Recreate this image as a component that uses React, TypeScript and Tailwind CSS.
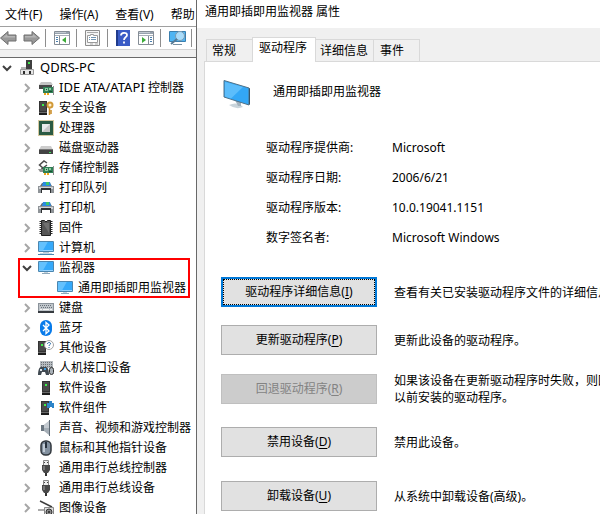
import type { ReactNode } from "react";

const ui = "font-['Noto_Sans','Noto_Sans_CJK_SC',sans-serif]";

const Screen = () => (
  <>
    <path d="M1 1.5h14v9H1z" fill="#35a9fa" />
    <path d="M1 1.5h9l-5 9H1z" fill="#64c1fd" />
    <path d="M.5 1.5h15v10H.5z" fill="none" stroke="#4a86b0" />
  </>
);

const Monitor = () => (
  <svg width="16" height="16" viewBox="0 0 16 16" className="shrink-0">
    <Screen />
    <path d="M6 12h4v1H6z" fill="#c3d2dd" />
    <path d="M4 13h8v1H4z" fill="#8fa9bb" />
  </svg>
);

const Computer = () => (
  <svg width="16" height="16" viewBox="0 0 16 16" className="shrink-0">
    <Screen />
    <path d="M5 12h6v1H5z" fill="#b9c8d3" />
    <path d="M2 13h12v1H2z" fill="#c2d6e4" />
    <path d="M0 14h16v1H0z" fill="#4a86b0" />
  </svg>
);

const Tower = ({ children, x = 4 }: { children?: ReactNode; x?: number }) => (
  <svg width="16" height="16" viewBox="0 0 16 16" className="shrink-0">
    <path d={`M${x} 1h8v14H${x}z`} fill="#333" />
    <path d={`M${x + 1} 2h6v9H${x + 1}z`} fill="#4a4a4a" />
    <path d={`M${x + 3} 4h2v2H${x + 3}z`} fill="#3df04a" />
    <path d={`M${x} 12h8v1H${x}z`} fill="#6a6a6a" />
    <path d={`M${x} 13h8v2H${x}z`} fill="#1d1d1d" />
    {children}
  </svg>
);

const PcRoot = () => (
  <svg width="16" height="16" viewBox="0 0 16 16" className="shrink-0">
    <path d="M6 0h6v10H6z" fill="#3f3f3f" />
    <path d="M8 2h2v2H8z" fill="#42e84c" />
    <path d="M1 7h5v2H1z" fill="#b4b4b4" />
    <path d="M.5 9.5h13v5H.5z" fill="#e6e6e6" stroke="#9a9a9a" />
    <path d="M3 11h2v3H3zM9 11h2v3H9z" fill="#2c2c2c" />
  </svg>
);

const Card = () => (
  <>
    <path d="M5 7h10v6H5z" fill="#2f8055" />
    <path d="M7 8h3v3H7zM11 8h2v2h-2z" fill="#8ccaa2" />
    <path d="M8 9h1v1H8zM11 11h3v1h-3z" fill="#184f33" />
    <path d="M6 13h2v2H6zM9 13h2v2H9z" fill="#eda61c" />
    <path d="M15 6h1v9h-1z" fill="#8f8f8f" />
  </>
);

const Ide = () => (
  <svg width="16" height="16" viewBox="0 0 16 16" className="shrink-0">
    <path d="M3 2h10l2 3H1z" fill="#c4c4c4" />
    <path d="M1 5h13v4H1z" fill="#484848" />
    <Card />
  </svg>
);

const Storage = () => (
  <svg width="16" height="16" viewBox="0 0 16 16" className="shrink-0">
    <path d="M9 3 6 1 1.5 5 5 8l4-3M3 9h3" fill="none" stroke="#4c4c4c" strokeWidth="1.5" />
    <path d="M0 9h8v3H2z" fill="#929292" />
    <Card />
  </svg>
);

const Security = () => (
  <Tower x={1}>
    <path d="M11.5 8v7M11 11h3M11 13h3" stroke="#c98b24" strokeWidth="1.5" />
    <circle cx="12" cy="5" r="2.5" fill="#fff0cf" stroke="#d29a38" strokeWidth="2" />
  </Tower>
);

const Cpu = () => (
  <svg width="16" height="16" viewBox="0 0 16 16" className="shrink-0">
    <path d="M.5.5h15v15H.5z" fill="none" stroke="#aa9343" strokeDasharray="1 1" />
    <path d="M1 1h14v14H1z" fill="#2b5b43" />
    <path d="M4 4h8v8H4z" fill="#c7c7c7" />
    <path d="M4 4h8l-8 8z" fill="#ebebeb" />
  </svg>
);

const Disk = () => (
  <svg width="16" height="16" viewBox="0 0 16 16" className="shrink-0">
    <path d="M3 6h10l2 4H1z" fill="#cdcdcd" />
    <path d="M1 9h14v5H1z" fill="#434343" />
    <path d="M1 9h14v1H1z" fill="#777" />
    <path d="M11 12h2v1h-2z" fill="#3de15c" />
  </svg>
);

const Printer = () => (
  <svg width="16" height="16" viewBox="0 0 16 16" className="shrink-0">
    <path d="M2 6 4 3h8l2 3z" fill="#686c70" />
    <path d="M5 2h7l1 4H4z" fill="#2b8be0" />
    <path d="M8 2h3v3H8z" fill="#3fc46b" />
    <path d="M0 6h16v7H0z" fill="#8f9498" />
    <path d="M1 7h14v2H1z" fill="#cfd2d5" />
    <path d="M3 8h10v5H3z" fill="#2f3234" />
    <path d="M4 10h8v4H4z" fill="#fff" />
  </svg>
);

const Firmware = () => (
  <svg width="16" height="16" viewBox="0 0 16 16" className="shrink-0">
    <path d="M2.5 1v14M13.5 1v14" stroke="#2d2d2d" strokeDasharray="1 1" strokeWidth="2" />
    <path d="M3.500.5h3L8 2 9.500.5h3v15h-9z" fill="#565656" stroke="#222" />
    <path d="M5 3h6v10z" fill="#707070" />
  </svg>
);

const Keyboard = () => (
  <svg width="16" height="16" viewBox="0 0 16 16" className="shrink-0">
    <path d="M0 3h16v10H0z" fill="#8b939b" />
    <path d="M1 4h14v7H1z" fill="#c0c6cb" />
    <path d="M2 5.500h12M3 7.500h11" stroke="#68717a" strokeDasharray="1 1" />
    <path d="M2 9.500h2M5 9.500h6M12 9.500h2" stroke="#f5f5f5" />
    <path d="M0 11h16v2H0z" fill="#363b40" />
  </svg>
);

const Bluetooth = () => (
  <svg width="16" height="16" viewBox="0 0 16 16" className="shrink-0">
    <rect x="2" width="12" height="16" rx="6" fill="#087bea" />
    <path d="m5 5 6 6-3 2.500v-11L11 5l-6 6" fill="none" stroke="#fff" strokeWidth="1.300" />
  </svg>
);

const Unknown = () => (
  <Tower x={0}>
    <circle cx="11" cy="5" r="4.500" fill="#fff" stroke="#a5a5a5" />
    <path d="M9.500 4c0-2 3-2 3-.3 0 1-1.500 1-1.500 2.300M11 7v1" fill="none" stroke="#1f66a3" />
  </Tower>
);

const Hid = () => (
  <svg width="16" height="16" viewBox="0 0 16 16" className="shrink-0">
    <path d="M2 1h13v7H2z" fill="#b5bbc0" />
    <path d="M3 2.500h11M3 4.500h11M3 6.500h11" stroke="#6b7075" strokeDasharray="1 1" />
    <path d="M0 15c0-4 1-8 3-8h5c2 0 3 4 3 8H8l-1-3H4l-1 3z" fill="#414a52" />
    <path d="M2 9h2v2H2z" fill="#dce4ea" />
    <path d="M6 8h2v2H6z" fill="#3f9de0" />
    <rect x="11.500" y="7.500" width="4" height="7" rx="2" fill="#a8b0b7" stroke="#333" />
  </svg>
);

const SoftComponent = () => (
  <Tower x={3}>
    <path d="M9 3h2V1h3v2h2v5h-2V7h-2v1H9z" fill="#2d84c8" />
  </Tower>
);

const Speaker = () => (
  <svg width="16" height="16" viewBox="0 0 16 16" className="shrink-0">
    <path d="M3 5h3v6H3z" fill="#6b7680" />
    <path d="m6 5 5-4v14l-5-4z" fill="#a5aeb6" />
    <path d="m6 5 5-4v7H6z" fill="#c4cad0" />
    <path d="M11 0h1v16h-1z" fill="#5f6a74" />
  </svg>
);

const Mouse = () => (
  <svg width="16" height="16" viewBox="0 0 16 16" className="shrink-0">
    <rect x="3" y="1" width="10" height="14" rx="4.500" fill="#8391a0" stroke="#30363c" strokeWidth="1.500" />
    <path d="M5 4h2v8H5z" fill="#c1cbd5" />
    <path d="M7 2h2v6H7z" fill="#28323d" />
  </svg>
);

const Usb = () => (
  <svg width="16" height="16" viewBox="0 0 16 16" className="shrink-0">
    <path d="M5.500.5h5v5h-5z" fill="#ededed" stroke="#888" />
    <path d="M6 2h1v1H6zM9 2h1v1H9z" fill="#444" />
    <path d="M4 5h8v5l-2 3H6l-2-3z" fill="#494949" />
    <path d="M7 13h2v3H7z" fill="#333" />
    <path d="M5 6h2v4H5z" fill="#777" />
  </svg>
);

const Imaging = () => (
  <svg width="16" height="16" viewBox="0 0 16 16" className="shrink-0">
    <path d="m2 1 12 6" stroke="#3d3d3d" strokeWidth="1.500" />
    <path d="M0 9h8v2H0z" fill="#aaa" />
    <path d="M6.500 7.500h9V16h-9z" fill="#ddd" stroke="#888" />
    <circle cx="11" cy="12" r="3" fill="#888" stroke="#333" />
    <circle cx="11" cy="12" r="1" fill="#222" />
  </svg>
);

type Device = { name: string; model?: string; icon: ReactNode };

const devices: Device[] = [
  { model: "IDE ATA/ATAPI", name: "控制器", icon: <Ide /> },
  { name: "安全设备", icon: <Security /> },
  { name: "处理器", icon: <Cpu /> },
  { name: "磁盘驱动器", icon: <Disk /> },
  { name: "存储控制器", icon: <Storage /> },
  { name: "打印队列", icon: <Printer /> },
  { name: "打印机", icon: <Printer /> },
  { name: "固件", icon: <Firmware /> },
  { name: "计算机", icon: <Computer /> },
];

const moreDevices: Device[] = [
  { name: "键盘", icon: <Keyboard /> },
  { name: "蓝牙", icon: <Bluetooth /> },
  { name: "其他设备", icon: <Unknown /> },
  { name: "人机接口设备", icon: <Hid /> },
  { name: "软件设备", icon: <Tower /> },
  { name: "软件组件", icon: <SoftComponent /> },
  { name: "声音、视频和游戏控制器", icon: <Speaker /> },
  { name: "鼠标和其他指针设备", icon: <Mouse /> },
  { name: "通用串行总线控制器", icon: <Usb /> },
  { name: "通用串行总线设备", icon: <Usb /> },
  { name: "图像设备", icon: <Imaging /> },
];

function Chevron({ open }: { open?: boolean }) {
  return (
    <svg width="10" height="10" viewBox="0 0 10 10" fill="none" strokeWidth="2">
      {open ? <path d="m1 3 4 4 4-4" stroke="#404040" /> : <path d="m3 1 4 4-4 4" stroke="#a6a6a6" />}
    </svg>
  );
}

function DeviceRow({ name, model, icon, open }: Device & { open?: boolean }) {
  return (
    <li className="flex h-5 items-center pl-[22px]">
      <button type="button" aria-label={name} aria-expanded={!!open} className="mr-1.5">
        <Chevron open={open} />
      </button>
      {icon}
      <span className="ml-[5px]">
        {model && <span className="text-[13px]">{model} </span>}
        {name}
      </span>
    </li>
  );
}

const Arrow = ({ back }: { back?: boolean }) => (
  <svg width="17" height="16" viewBox="0 0 17 16">
    <path
      d={back ? "M.5 8 8 1.500V5h8v6H8v3.500z" : "M16.500 8 9 1.500V5H1v6h8v3.500z"}
      fill="#999"
      stroke="#6f6f6f"
    />
    <path d={back ? "M3 7.500 7 4v2h8v1.500z" : "M2 6h8V4l4 3.500H2z"} fill="#b5b5b5" />
  </svg>
);

const PaneIcon = ({ right }: { right?: boolean }) => (
  <svg width="16" height="14" viewBox="0 0 16 14">
    <path d="M.5.5h15v13H.5z" fill="#fff" stroke="#858d96" />
    <path d="M1 1h14v2H1z" fill="#97a2ae" />
    <path d="M1 1.500h11" stroke="#c3cad1" />
    <path d="M1 4.500h14" stroke="#a9b0b8" />
    {right ? (
      <>
        <path d="M10.500 5v8" stroke="#858d96" />
        <path d="M12 6.500h2M12 8.500h2M12 10.500h2" stroke="#4a7fae" />
        <path d="M4 6v6l4-3z" fill="#3cab38" />
      </>
    ) : (
      <>
        <path d="M5.500 5v8" stroke="#858d96" />
        <path d="M2 6.500h2M2 8.500h2M2 10.500h2" stroke="#4a7fae" />
        <path d="M12 6v6L8 9z" fill="#3cab38" />
      </>
    )}
  </svg>
);

const PropertiesIcon = () => (
  <svg width="16" height="16" viewBox="0 0 16 16">
    <path d="M.5.5h14v15H.5z" fill="#f4f4f4" stroke="#8c8c8c" />
    <path d="M2 2.500h11" stroke="#a9a9a9" />
    <path d="M2.500 5.500h3v-1h3v1h4v7h-10z" fill="#fff" stroke="#9a9a9a" />
    <path d="M4 7.500h1M6 7.500h5M4 9.500h1M6 9.500h5" stroke="#6f93b1" />
    <path d="M5 14h3M10 14h3" stroke="#aaa" />
  </svg>
);

const HelpIcon = () => (
  <svg width="14" height="16" viewBox="0 0 14 16">
    <path d="M0 0h14v16H0z" fill="#3a5cc6" />
    <path d="M0 0h2v16H0z" fill="#203b8c" />
    <path d="M5 5.500C5 2 11 2 11 5c0 2-3 2.500-3 5M8 11.500v2" fill="none" stroke="#fff" strokeWidth="1.800" />
  </svg>
);

const ScanIcon = () => (
  <svg width="18" height="16" viewBox="0 0 18 16">
    <path d="M.5 1.500h16v10H.5z" fill="#4fb5f3" stroke="#3b7fae" />
    <path d="M4 14h9v1H4z" fill="#7890a2" />
    <circle cx="11" cy="6" r="4.500" fill="#a9dcfa" stroke="#7f9aad" />
    <path d="m8 9-6 5" stroke="#577b96" strokeWidth="2" />
  </svg>
);

const Divider = () => <span className="h-[18px] w-px shrink-0 bg-[#8e8e8e]" />;

const toolButton = "shrink-0";

function DeviceManager() {
  return (
    <section className="min-w-0 overflow-hidden bg-white whitespace-nowrap">
      <nav className="flex h-[26px] items-center gap-[17px] pt-1 pl-[5px]">
        {["文件(F)", "操作(A)", "查看(V)", "帮助"].map((label) => (
          <button type="button" className="shrink-0" key={label}>
            {label}
          </button>
        ))}
      </nav>
      <div className="flex h-6 items-center border-t border-b border-t-[#a0a0a0] border-b-[#d4d4d4]">
        <button type="button" aria-label="后退" className={toolButton}>
          <Arrow back />
        </button>
        <button type="button" aria-label="前进" className={`mr-[5px] ml-1.5 ${toolButton}`}>
          <Arrow />
        </button>
        <Divider />
        <button type="button" aria-label="显示控制台树" className={`mr-1.5 ml-2 ${toolButton}`}>
          <PaneIcon />
        </button>
        <Divider />
        <button type="button" aria-label="属性" className={`mr-1.5 ml-2 ${toolButton}`}>
          <PropertiesIcon />
        </button>
        <Divider />
        <button type="button" aria-label="帮助主题" className={`mx-2 ${toolButton}`}>
          <HelpIcon />
        </button>
        <button type="button" aria-label="显示操作窗格" className={`mr-1.5 ${toolButton}`}>
          <PaneIcon right />
        </button>
        <Divider />
        <button type="button" aria-label="扫描检测硬件改动" className={`mr-1 ml-2 ${toolButton}`}>
          <ScanIcon />
        </button>
        <Divider />
      </div>
      <div className="h-2 border-b border-[#696969] bg-[#f0f0f0]" />
      <ul>
        <li className="flex h-5 items-center pl-0.5">
          <button type="button" aria-label="QDRS-PC" aria-expanded="true" className="mr-2">
            <Chevron open />
          </button>
          <PcRoot />
          <span className="ml-1 text-[13px]">QDRS-PC</span>
        </li>
        {devices.map((device) => (
          <DeviceRow key={device.name} {...device} />
        ))}
        <li className="mr-1.5 ml-[18px] outline-2 -outline-offset-2 outline-[#ff0000]">
          <ul className="-ml-[18px]">
            <DeviceRow name="监视器" icon={<Monitor />} open />
            <li className="flex h-5 items-center pl-[57px]">
              <Monitor />
              <span className="ml-[5px]">通用即插即用监视器</span>
            </li>
          </ul>
        </li>
        {moreDevices.map((device) => (
          <DeviceRow key={device.name} {...device} />
        ))}
      </ul>
    </section>
  );
}

const details = [
  { term: "驱动程序提供商:", value: "Microsoft" },
  { term: "驱动程序日期:", value: "2006/6/21" },
  { term: "驱动程序版本:", value: "10.0.19041.1151" },
  { term: "数字签名者:", value: "Microsoft Windows" },
];

const actions = [
  { label: "驱动程序详细信息", shortcut: "I", text: "查看有关已安装驱动程序文件的详细信息。", row: "h-12", focused: true },
  { label: "更新驱动程序", shortcut: "P", text: "更新此设备的驱动程序。", row: "h-12" },
  { label: "回退驱动程序", shortcut: "R", text: "如果该设备在更新驱动程序时失败，则回退到\n以前安装的驱动程序。", row: "h-[50px]", disabled: true },
  { label: "禁用设备", shortcut: "D", text: "禁用此设备。", row: "h-14" },
  { label: "卸载设备", shortcut: "U", text: "从系统中卸载设备(高级)。", row: "h-[52px]" },
];

function ActionButton({ label, shortcut, focused, disabled }: { label: string; shortcut: string; focused?: boolean; disabled?: boolean }) {
  const look = focused
    ? "border-2 border-[#0078d7] bg-[#e1e1e1]"
    : disabled
      ? "border border-[#bfbfbf] bg-[#cccccc] text-[#838383]"
      : "border border-[#adadad] bg-[#e1e1e1]";
  return (
    <button type="button" disabled={disabled} className={`h-[30px] w-[156px] shrink-0 ${look}`}>
      <span className={`flex h-full items-center justify-center ${focused ? "border border-dotted border-black" : ""}`}>
        {label}(<u className="underline-offset-2">{shortcut}</u>)
      </span>
    </button>
  );
}

const tabs = [
  { label: "常规", width: "w-[47px] pl-[5px]" },
  { label: "驱动程序", width: "w-[64px] pl-1.5", active: true },
  { label: "详细信息", width: "w-[59px] pl-1" },
  { label: "事件", width: "w-[47px] pl-1.5" },
];

function PropertiesDialog() {
  return (
    <section className="flex min-w-0 flex-col overflow-hidden border-l border-[#696969] bg-[#f0f0f0] whitespace-nowrap">
      <h1 className="flex h-7 shrink-0 items-center bg-white pb-1 pl-2">通用即插即用监视器 属性</h1>
      <div role="tablist" className="flex h-[33px] shrink-0 items-end pl-[9px]">
        {tabs.map(({ label, width, active }) => (
          <button
            type="button"
            role="tab"
            aria-selected={!!active}
            key={label}
            className={`-mr-px shrink-0 border border-[#d9d9d9] text-left ${width} ${
              active ? "z-10 -mb-px h-[25px] border-b-0 bg-white pb-1" : "h-[22px] border-b-0"
            }`}
          >
            {label}
          </button>
        ))}
      </div>
      <div role="tabpanel" className="ml-[7px] shrink-0 grow border-t border-l border-[#d9d9d9] bg-white">
        <div className="flex items-start gap-[22px] pt-[18px] pl-[18px]">
          <svg width="28" height="30" viewBox="0 0 28 30">
            <path d="M6 25q8-4 14 2-7 3-14-2z" fill="#c9d4db" />
            <path d="M12 20h6v6h-3z" fill="#a4b3bd" />
            <path d="M1 .5 26 8v17L1 17z" fill="#33a7f6" stroke="#4f7188" />
            <path d="m2 2 18 5-12 11.500L2 16.500z" fill="#5cbdfb" />
            <path d="m26 8 1 .5V24l-1 1z" fill="#39566a" />
          </svg>
          <h2 className="pt-1">通用即插即用监视器</h2>
        </div>
        <dl className="grid auto-rows-[30px] grid-cols-[126px_1fr] items-center pt-[23px] pl-[61px]">
          {details.map(({ term, value }) => (
            <div className="contents" key={term}>
              <dt>{term}</dt>
              <dd>{value}</dd>
            </div>
          ))}
        </dl>
        <div className="pt-[15px] pl-4">
          {actions.map(({ text, row, ...button }) => (
            <div className={`flex items-center gap-[17px] ${row}`} key={button.label}>
              <ActionButton {...button} />
              <p className="leading-[17px] whitespace-pre">{text}</p>
            </div>
          ))}
        </div>
      </div>
    </section>
  );
}

export default function App() {
  return (
    <main className={`grid h-screen grid-cols-[196px_1fr] overflow-hidden text-xs text-black ${ui}`}>
      <DeviceManager />
      <PropertiesDialog />
    </main>
  );
}
